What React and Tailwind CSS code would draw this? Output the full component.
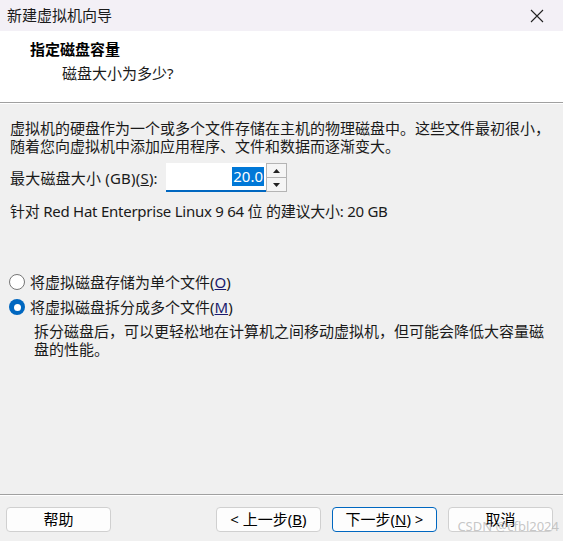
import React from "react";

const font = { fontFamily: '"Noto Sans", "Noto Sans CJK SC", sans-serif' };

const Radio = ({ checked, label, accel }) => (
  <div className="flex items-center h-[18px]">
    {checked ? (
      <span className="w-4 h-4 rounded-full bg-[#0067c0] flex items-center justify-center">
        <span className="w-[7px] h-[7px] rounded-full bg-white" />
      </span>
    ) : (
      <span className="w-4 h-4 rounded-full border border-[#767676] bg-white" />
    )}
    <span className="ml-[5px]">
      {label}(<span className="underline text-[#1a1a6e]">{accel}</span>)
    </span>
  </div>
);

const Button = ({ children, primary }) => (
  <button
    className={`w-[105px] h-[25px] rounded-[4px] bg-[#fdfdfd] text-[15px] leading-none text-black flex items-center justify-center ${
      primary ? "border border-[#0067c0]" : "border border-[#d0d0d0]"
    }`}
  >
    {children}
  </button>
);

export default function App() {
  return (
    <div className="w-[563px] h-[541px] bg-[#f0f0f0] flex flex-col relative text-[15px] text-[#1a1a1a]" style={font}>
      {/* title bar */}
      <div className="h-[31px] bg-[#f3f0f6] flex items-center justify-between pl-[7px] pr-[19px]">
        <span className="leading-none">新建虚拟机向导</span>
        <svg width="14" height="14" viewBox="0 0 14 14" stroke="#222" strokeWidth="1.1">
          <path d="M1 1 L13 13 M13 1 L1 13" />
        </svg>
      </div>

      {/* header */}
      <div className="h-[71px] bg-white pl-[30px] pt-[9px]">
        <div className="font-bold leading-[18px] text-black">指定磁盘容量</div>
        <div className="pl-[32px] mt-[6px] leading-[18px]">磁盘大小为多少?</div>
      </div>
      <div className="border-t border-[#a0a0a0] border-b border-b-white" />

      {/* body */}
      <div className="flex-1 pl-[10px] pt-[15px] leading-[18px]">
        <div>虚拟机的硬盘作为一个或多个文件存储在主机的物理磁盘中。这些文件最初很小，</div>
        <div>随着您向虚拟机中添加应用程序、文件和数据而逐渐变大。</div>

        <div className="flex items-center mt-[8px]">
          <span className="w-[156px] shrink-0 tracking-[0.2px]">
            最大磁盘大小 (GB)(<span className="underline">S</span>):
          </span>
          <div className="flex">
            <div className="w-[100px] h-[29px] bg-white border-b-2 border-[#0067c0] flex items-center justify-end pr-[2px]">
              <span className="bg-[#0078d7] text-white leading-[19px] px-[1px]">20.0</span>
            </div>
            <div className="w-[21px] h-[29px] flex flex-col border border-[#b4b4b4] bg-[#f5f5f5]">
              <div className="flex-1 flex items-center justify-center border-b border-[#b4b4b4]">
                <svg width="7" height="4" viewBox="0 0 7 4"><path d="M0 4 L3.5 0 L7 4 Z" fill="#222" /></svg>
              </div>
              <div className="flex-1 flex items-center justify-center">
                <svg width="7" height="4" viewBox="0 0 7 4"><path d="M0 0 L3.5 4 L7 0 Z" fill="#222" /></svg>
              </div>
            </div>
          </div>
        </div>

        <div className="mt-[10px] tracking-[-0.25px]">针对 Red Hat Enterprise Linux 9 64 位 的建议大小: 20 GB</div>

        <div className="mt-[53px] flex flex-col gap-[7px] -ml-[1px]">
          <Radio label="将虚拟磁盘存储为单个文件" accel="O" />
          <Radio checked label="将虚拟磁盘拆分成多个文件" accel="M" />
        </div>
        <div className="pl-[24px] mt-[6px] pr-[10px]">
          <div>拆分磁盘后，可以更轻松地在计算机之间移动虚拟机，但可能会降低大容量磁</div>
          <div>盘的性能。</div>
        </div>
      </div>

      {/* footer */}
      <div className="border-t border-[#a0a0a0] border-b border-b-white" />
      <div className="h-[45px] flex items-start pt-[11px] pl-[6px] pr-[10px]">
        <Button>帮助</Button>
        <div className="flex-1" />
        <div className="flex gap-[11px]">
          <Button>
            &lt; 上一步(<span className="underline">B</span>)
          </Button>
          <Button primary>
            下一步(<span className="underline">N</span>) &gt;
          </Button>
          <Button>取消</Button>
        </div>
      </div>

      <span className="absolute right-[4px] bottom-[8px] text-[13px] leading-none text-[#b8b8b8]/80 pointer-events-none">
        CSDN @cfbl2024
      </span>
    </div>
  );
}
